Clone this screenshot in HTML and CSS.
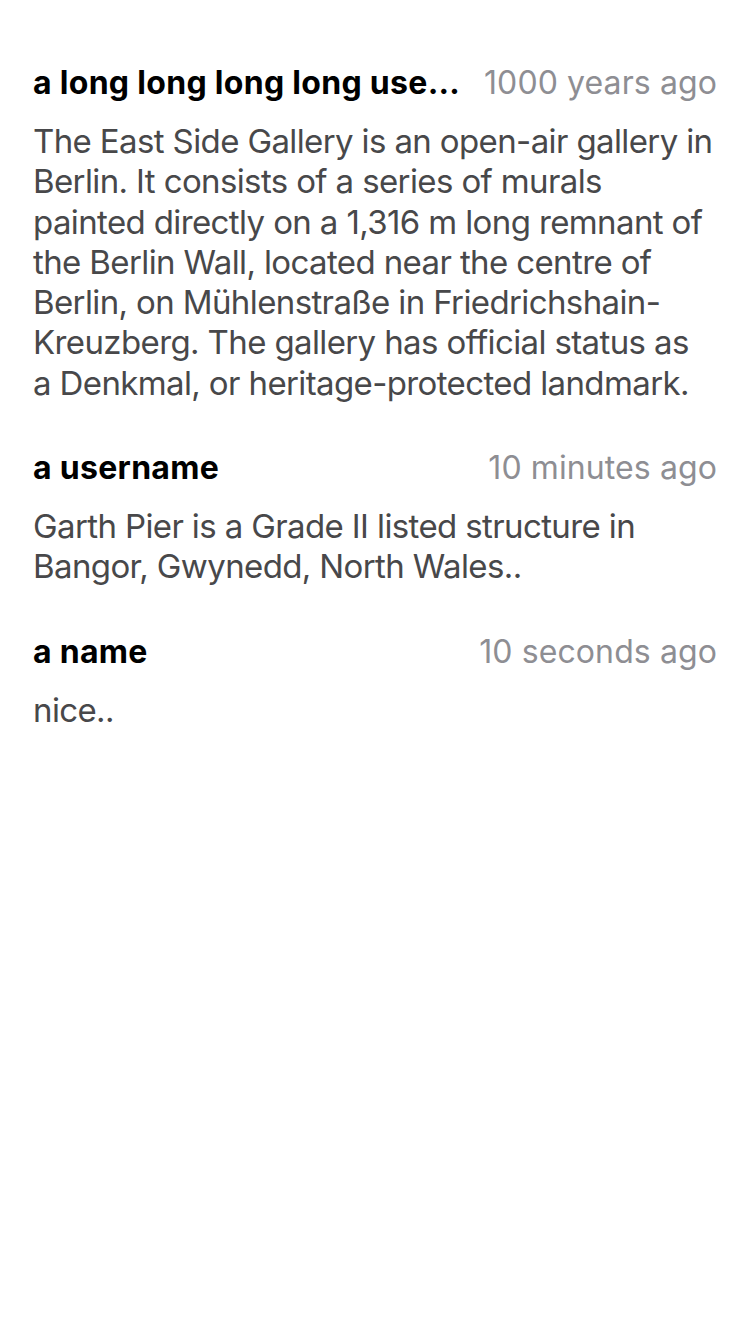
FILE: index.html
```html
<!DOCTYPE html>
<html>
<head>
<meta charset="utf-8">
<link rel="stylesheet" href="styles.css">
</head>
<body>
<div class="list">
  <div class="item">
    <div class="head">
      <span class="name">a long long long long username here</span>
      <span class="time">1000 years ago</span>
    </div>
    <p class="body">The East Side Gallery is an open-air gallery in Berlin. It consists of a series of murals painted directly on a 1,316 m long remnant of the Berlin Wall, located near the centre of Berlin, on Mühlenstraße in Friedrichshain-Kreuzberg. The gallery has official status as a&nbsp;Denkmal, or heritage-protected landmark.</p>
  </div>
  <div class="item">
    <div class="head">
      <span class="name">a username</span>
      <span class="time">10 minutes ago</span>
    </div>
    <p class="body">Garth Pier is a Grade II listed structure in Bangor, Gwynedd, North Wales..</p>
  </div>
  <div class="item">
    <div class="head">
      <span class="name">a name</span>
      <span class="time">10 seconds ago</span>
    </div>
    <p class="body">nice..</p>
  </div>
</div>
</body>
</html>
```
FILE: styles.css
```css
html, body {
  margin: 0;
  padding: 0;
  background: #ffffff;
}
body {
  font-family: Inter, "Noto Sans", sans-serif;
}
.list {
  display: flex;
  flex-direction: column;
  gap: 45px;
  padding: 63px 33px 0 33px;
}
.item {
  display: flex;
  flex-direction: column;
  gap: 18px;
}
.head {
  display: flex;
  justify-content: space-between;
  align-items: center;
  gap: 22px;
  height: 40px;
  line-height: 40px;
  font-size: 32px;
}
.name {
  font-weight: 700;
  color: #000;
  white-space: nowrap;
  overflow: hidden;
  text-overflow: ellipsis;
  min-width: 0;
  letter-spacing: 0.3px;
}
.time {
  color: #8e8e93;
  white-space: nowrap;
  flex-shrink: 0;
  letter-spacing: 0.1px;
}
.body {
  margin: 0;
  font-size: 33px;
  line-height: 40.3px;
  letter-spacing: -0.62px;
  color: #48484a;
}
```
